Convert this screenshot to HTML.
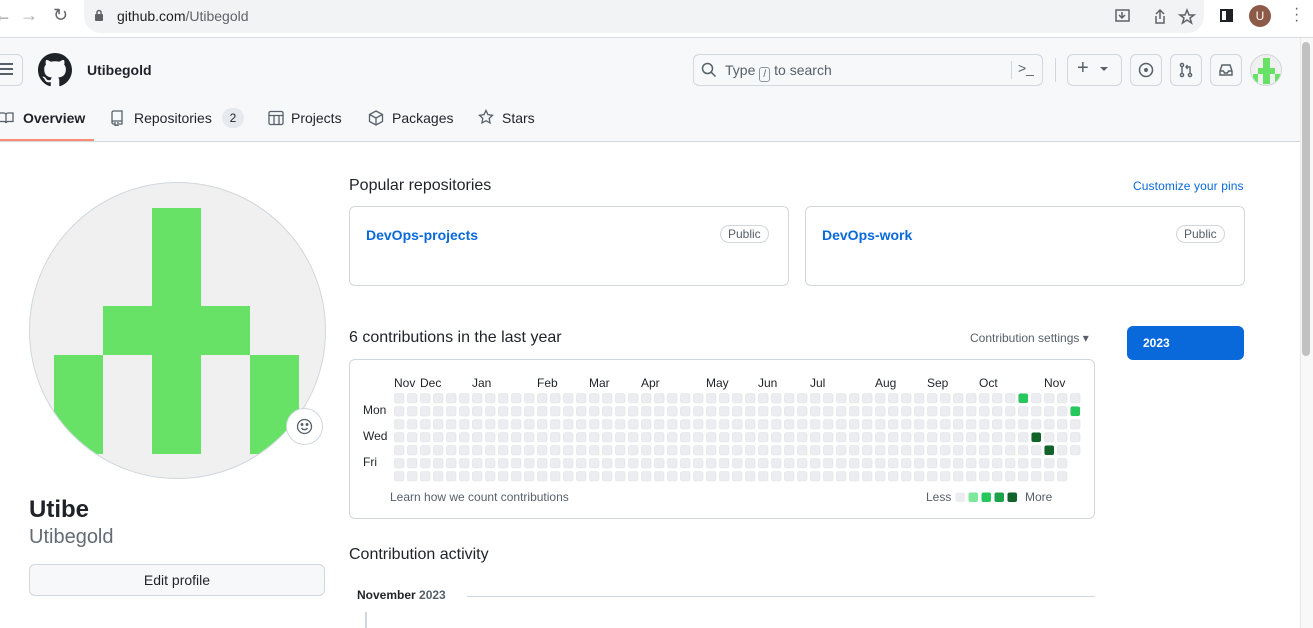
<!DOCTYPE html>
<html><head><meta charset="utf-8"><style>
*{box-sizing:border-box;margin:0;padding:0}
body{width:1313px;height:628px;overflow:hidden;background:#fff;font-family:"Liberation Sans",Helvetica,Arial,sans-serif;color:#1f2328;position:relative}
.a{position:absolute}
.chrome{left:0;top:0;width:1313px;height:38px;background:#fff;border-bottom:1px solid #dadce0}
.url{left:84px;top:0;width:1120px;height:33px;background:#f1f3f4;border-radius:0 0 17px 17px}
.hdr{left:0;top:38px;width:1300px;height:104px;background:#f6f8fa;border-bottom:1px solid #d0d7de}
.btn{border:1px solid #d0d7de;border-radius:6px;background:#f6f8fa}
.tab{top:110px;font-size:14px;color:#1f2328}
.card{border:1px solid #d0d7de;border-radius:6px;background:#fff}
.pill{border:1px solid #d0d7de;border-radius:12px;font-size:12px;color:#57606a;padding:1px 7px}
.lnk{color:#0969da;font-weight:bold;font-size:14px}
.m{font-size:12px;top:376px}
</style></head><body>
<div class="a chrome"></div>
<div class="a url"></div>
<div class="a" style="left:-6px;top:5px;font-size:18px;color:#5f6368">←</div>
<div class="a" style="left:20px;top:5px;font-size:18px;color:#aaa">→</div>
<div class="a" style="left:53px;top:5px;font-size:18px;color:#5f6368">↻</div>
<svg class="a" style="left:94px;top:9px" width="10" height="13"><rect x="1" y="5" width="8" height="7" rx="1" fill="#5f6368"/><path d="M3 5V3.5a2 2 0 0 1 4 0V5" stroke="#5f6368" fill="none" stroke-width="1.5"/></svg>
<div class="a" style="left:117px;top:8px;font-size:14px;color:#202124">github.com<span style="color:#5f6368">/Utibegold</span></div>
<svg class="a" style="left:1114px;top:8px" width="90" height="18" fill="none" stroke="#5f6368" stroke-width="1.5"><rect x="2" y="2" width="13" height="11"/><path d="M8 4v6M5 7l3 3 3-3"/><path d="M42 6l4-4 4 4M46 2v9M42 8v7h8V8"/><path d="M73 2l2 5h5l-4 3 1.5 5-4.5-3-4.5 3 1.5-5-4-3h5z"/></svg>
<div class="a" style="left:1220px;top:9px;width:13px;height:13px;border:2px solid #202124;border-right-width:7px"></div>
<div class="a" style="left:1249px;top:5px;width:22px;height:22px;border-radius:50%;background:#8d5a48;color:#fff;font-size:12px;text-align:center;line-height:22px">U</div>
<div class="a" style="left:1294px;top:6px;font-size:16px;color:#5f6368;line-height:6px">·<br>·<br>·</div>

<div class="a hdr"></div>
<div class="a btn" style="left:-10px;top:54px;width:33px;height:32px"></div>
<div class="a" style="left:0;top:63px;width:13px;height:2px;background:#57606a;box-shadow:0 5px 0 #57606a,0 10px 0 #57606a"></div>
<svg class="a" style="left:38px;top:53px" width="34" height="34" viewBox="0 0 16 16"><path fill="#1f2328" d="M8 0C3.58 0 0 3.58 0 8c0 3.54 2.290 6.53 5.470 7.59.4.07.55-.17.55-.38 0-.19-.01-.82-.01-1.490-2.010.37-2.530-.49-2.690-.94-.09-.23-.48-.94-.82-1.130-.28-.15-.68-.52-.01-.53.63-.01 1.080.58 1.230.82.72 1.210 1.870.87 2.330.66.07-.52.28-.87.51-1.070-1.780-.2-3.640-.89-3.640-3.950 0-.87.31-1.590.82-2.150-.08-.2-.36-1.020.08-2.120 0 0 .67-.21 2.200.82.64-.18 1.320-.27 2-.27.68 0 1.360.09 2 .27 1.530-1.040 2.200-.82 2.200-.82.44 1.100.16 1.920.08 2.120.51.56.82 1.270.82 2.150 0 3.070-1.870 3.750-3.650 3.950.29.25.54.73.54 1.480 0 1.070-.01 1.930-.01 2.200 0 .21.15.46.55.38A8.013 8.013 0 0016 8c0-4.420-3.580-8-8-8z"/></svg>
<div class="a" style="left:87px;top:62px;font-size:14px;font-weight:bold">Utibegold</div>
<div class="a btn" style="left:693px;top:54px;width:350px;height:32px;background:#f6f8fa"></div>
<svg class="a" style="left:701px;top:62px" width="16" height="16" fill="none" stroke="#57606a" stroke-width="1.5"><circle cx="6.5" cy="6.5" r="5"/><path d="M10 10l4.5 4.5"/></svg>
<div class="a" style="left:725px;top:62px;font-size:14px;color:#57606a">Type <span style="display:inline-block;border:1px solid #8c959f;border-radius:3px;width:11px;height:15px;font-size:10px;text-align:center;line-height:13px;vertical-align:-2px">/</span> to search</div>
<div class="a" style="left:1011px;top:61px;width:1px;height:18px;background:#d0d7de"></div>
<div class="a" style="left:1018px;top:60px;font-size:14px;color:#57606a">&gt;_</div>
<div class="a" style="left:1055px;top:58px;width:1px;height:24px;background:#d0d7de"></div>
<div class="a btn" style="left:1067px;top:54px;width:55px;height:32px"></div>
<div class="a" style="left:1077px;top:57px;font-size:20px;color:#57606a">+</div>
<div class="a" style="left:1100px;top:67px;border:4px solid transparent;border-top:4px solid #57606a"></div>
<div class="a btn" style="left:1130px;top:54px;width:32px;height:32px"></div>
<svg class="a" style="left:1138px;top:62px" width="16" height="16" fill="none" stroke="#57606a" stroke-width="1.5"><circle cx="8" cy="8" r="6.5"/><circle cx="8" cy="8" r="1.2" fill="#57606a"/></svg>
<div class="a btn" style="left:1170px;top:54px;width:32px;height:32px"></div>
<svg class="a" style="left:1178px;top:62px" width="16" height="16" fill="none" stroke="#57606a" stroke-width="1.4"><circle cx="4" cy="3" r="1.6"/><circle cx="4" cy="13" r="1.6"/><circle cx="12" cy="13" r="1.6"/><path d="M4 5v6M12 11V5H8M9.5 3L8 5l1.5 2"/></svg>
<div class="a btn" style="left:1210px;top:54px;width:32px;height:32px"></div>
<svg class="a" style="left:1218px;top:62px" width="16" height="16" fill="none" stroke="#57606a" stroke-width="1.4"><path d="M2 9l2-6h8l2 6v4H2z M2 9h3.5l1 2h3l1-2H14"/></svg>
<div class="a" style="left:1250px;top:54px;width:32px;height:32px;border-radius:50%;background:#f0f0f0;border:1px solid #d0d7de;overflow:hidden">
<div class="a" style="left:12px;top:3px;width:7px;height:26px;background:#67e166"></div><div class="a" style="left:7px;top:13px;width:17px;height:6px;background:#67e166"></div><div class="a" style="left:2px;top:19px;width:5px;height:10px;background:#67e166"></div><div class="a" style="left:24px;top:19px;width:5px;height:10px;background:#67e166"></div></div>

<svg class="a" style="left:-2px;top:111px" width="18" height="14" fill="none" stroke="#57606a" stroke-width="1.3"><path d="M1 2h5a2 2 0 0 1 2 2v8a2 2 0 0 0-2-1.5H1zM15 2h-5a2 2 0 0 0-2 2v8a2 2 0 0 1 2-1.5h5z"/></svg>
<div class="a tab" style="left:23px;font-weight:bold">Overview</div>
<div class="a" style="left:0;top:139px;width:94px;height:2px;background:#fd8c73"></div>
<svg class="a" style="left:110px;top:110px" width="14" height="16" fill="none" stroke="#57606a" stroke-width="1.3"><path d="M2 13V2.5A1.5 1.5 0 0 1 3.5 1H12v10H3.5A1.5 1.5 0 0 0 2 12.5 1.5 1.5 0 0 0 3.5 14H5M12 11v3H9M5 12v4l1.5-1L8 16v-4"/></svg>
<div class="a tab" style="left:134px">Repositories</div>
<div class="a" style="left:222px;top:108px;width:22px;height:20px;border-radius:10px;background:#e6e9ed;font-size:12px;text-align:center;line-height:20px">2</div>
<svg class="a" style="left:268px;top:110px" width="16" height="16" fill="none" stroke="#57606a" stroke-width="1.3"><rect x="1" y="1.5" width="14" height="13" rx="1.5"/><path d="M1 5.5h14M6 5.5v9M11 5.5v9"/></svg>
<div class="a tab" style="left:291px">Projects</div>
<svg class="a" style="left:368px;top:110px" width="16" height="16" fill="none" stroke="#57606a" stroke-width="1.3"><path d="M8 1l6.5 3.5v7L8 15l-6.5-3.5v-7zM1.5 4.5L8 8l6.5-3.5M8 8v7"/></svg>
<div class="a tab" style="left:392px">Packages</div>
<svg class="a" style="left:478px;top:109px" width="16" height="16" fill="none" stroke="#57606a" stroke-width="1.3"><path d="M8 1.5l2 4.2 4.5.6-3.3 3.1.8 4.5L8 11.7l-4 2.2.8-4.5L1.5 6.3 6 5.7z"/></svg>
<div class="a tab" style="left:502px">Stars</div>

<div class="a" style="left:1300px;top:38px;width:13px;height:590px;background:#f8f8f8;border-left:1px solid #e8e8e8"></div>
<div class="a" style="left:1302px;top:42px;width:8px;height:314px;background:#c1c1c1;border-radius:4px"></div>

<div class="a" style="left:29px;top:182px;width:297px;height:297px;border-radius:50%;background:#f0f0f0;border:1px solid #d0d7de;overflow:hidden">
<div class="a" style="left:122px;top:25px;width:49px;height:246px;background:#67e166"></div>
<div class="a" style="left:73px;top:123px;width:147px;height:49px;background:#67e166"></div>
<div class="a" style="left:24px;top:172px;width:49px;height:99px;background:#67e166"></div>
<div class="a" style="left:220px;top:172px;width:49px;height:99px;background:#67e166"></div>
</div>
<div class="a" style="left:286px;top:408px;width:37px;height:37px;border-radius:50%;background:#fff;border:1px solid #d0d7de"></div>
<svg class="a" style="left:296px;top:418px" width="17" height="17" fill="none" stroke="#57606a" stroke-width="1.3"><circle cx="8.5" cy="8.5" r="7"/><path d="M5.5 10a3.5 3.5 0 0 0 6 0"/><circle cx="6" cy="6.5" r=".8" fill="#57606a"/><circle cx="11" cy="6.5" r=".8" fill="#57606a"/></svg>
<div class="a" style="left:29px;top:496px;font-size:24px;font-weight:bold">Utibe</div>
<div class="a" style="left:29px;top:526px;font-size:20px;color:#636c76">Utibegold</div>
<div class="a btn" style="left:29px;top:564px;width:296px;height:32px;font-size:14px;text-align:center;line-height:30px;font-weight:500">Edit profile</div>

<div class="a" style="left:349px;top:177px;font-size:16px">Popular repositories</div>
<div class="a" style="left:1133px;top:179px;font-size:12px;color:#0969da;letter-spacing:.1px">Customize your pins</div>
<div class="a card" style="left:349px;top:206px;width:440px;height:80px"></div>
<div class="a lnk" style="left:366px;top:227px">DevOps-projects</div>
<div class="a pill" style="left:720px;top:225px">Public</div>
<div class="a card" style="left:805px;top:206px;width:440px;height:80px"></div>
<div class="a lnk" style="left:822px;top:227px">DevOps-work</div>
<div class="a pill" style="left:1176px;top:225px">Public</div>

<div class="a" style="left:349px;top:329px;font-size:16px">6 contributions in the last year</div>
<div class="a" style="left:970px;top:331px;font-size:12px;color:#57606a">Contribution settings ▾</div>
<div class="a" style="left:1127px;top:326px;width:117px;height:34px;background:#0969da;border-radius:6px;color:#fff;font-size:12px;font-weight:bold;padding:10px 16px">2023</div>
<div class="a card" style="left:349px;top:359px;width:746px;height:160px"></div>
<div class="a m" style="left:394px">Nov</div><div class="a m" style="left:420px">Dec</div><div class="a m" style="left:472px">Jan</div><div class="a m" style="left:537px">Feb</div><div class="a m" style="left:589px">Mar</div><div class="a m" style="left:641px">Apr</div><div class="a m" style="left:706px">May</div><div class="a m" style="left:758px">Jun</div><div class="a m" style="left:810px">Jul</div><div class="a m" style="left:875px">Aug</div><div class="a m" style="left:927px">Sep</div><div class="a m" style="left:979px">Oct</div><div class="a m" style="left:1044px">Nov</div>
<div class="a" style="left:363px;top:403px;font-size:12px">Mon</div>
<div class="a" style="left:363px;top:429px;font-size:12px">Wed</div>
<div class="a" style="left:363px;top:455px;font-size:12px">Fri</div>
<svg class="a" style="left:394px;top:393px" width="690" height="91">
<defs><pattern id="p" width="13" height="13" patternUnits="userSpaceOnUse"><rect x=".5" y=".5" width="9.5" height="9.5" rx="2" fill="#ebedf0" stroke="#dfe1e4" stroke-width=".6"/></pattern></defs>
<rect width="689" height="91" fill="url(#p)"/>
<rect x="675" y="64" width="15" height="27" fill="#fff"/>
<rect x="624.5" y=".5" width="9.5" height="9.5" rx="2" fill="#26c75c"/>
<rect x="676.5" y="13.5" width="9.5" height="9.5" rx="2" fill="#26c75c"/>
<rect x="637.5" y="39.5" width="9.5" height="9.5" rx="2" fill="#116329"/>
<rect x="650.5" y="52.5" width="9.5" height="9.5" rx="2" fill="#116329"/>
</svg>
<div class="a" style="left:390px;top:490px;font-size:12px;color:#57606a">Learn how we count contributions</div>
<div class="a" style="left:926px;top:490px;font-size:12px;color:#57606a">Less</div>
<svg class="a" style="left:955px;top:492px" width="70" height="11"><rect x=".5" y=".5" width="9.5" height="9.5" rx="2" fill="#ebedf0"/><rect x="13.5" y=".5" width="9.5" height="9.5" rx="2" fill="#7ee89a"/><rect x="26.5" y=".5" width="9.5" height="9.5" rx="2" fill="#26c75c"/><rect x="39.5" y=".5" width="9.5" height="9.5" rx="2" fill="#1aa34a"/><rect x="52.5" y=".5" width="9.5" height="9.5" rx="2" fill="#116329"/></svg>
<div class="a" style="left:1025px;top:490px;font-size:12px;color:#57606a">More</div>

<div class="a" style="left:349px;top:546px;font-size:16px">Contribution activity</div>
<div class="a" style="left:357px;top:588px;font-size:12px;font-weight:bold">November <span style="color:#57606a">2023</span></div>
<div class="a" style="left:467px;top:596px;width:628px;height:1px;background:#d0d7de"></div>
<div class="a" style="left:365px;top:612px;width:2px;height:16px;background:#d0d7de"></div>
</body></html>
